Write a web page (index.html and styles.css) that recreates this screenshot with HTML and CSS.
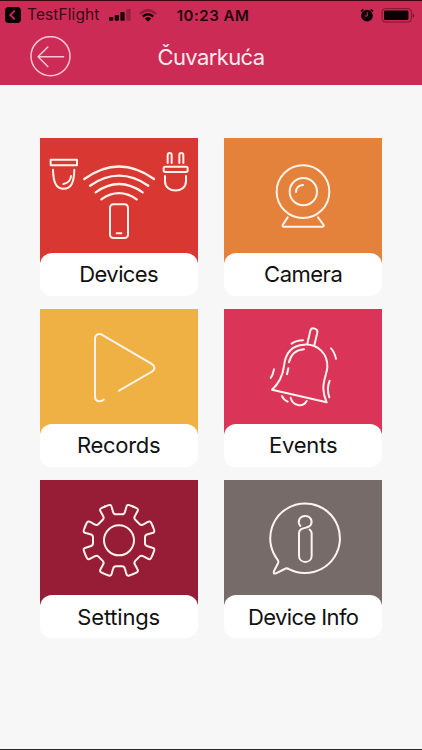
FILE: index.html
```html
<!DOCTYPE html>
<html lang="sr-Latn">
<head>
<meta charset="utf-8">
<title>Čuvarkuća</title>
<link rel="stylesheet" href="styles.css">
</head>
<body>
<div class="screen">
  <header class="header">
    <div class="status">
      <div class="status-left">
        <svg class="back-app" viewBox="0 0 48 48"><rect width="48" height="48" rx="11" fill="#0b0205"/><path d="M29 11 16 24 29 37" fill="none" stroke="#cb2b54" stroke-width="5.5"/></svg>
        <span class="app-name">TestFlight</span>
        <svg class="signal" viewBox="0 0 66 36"><g fill="#17040a"><rect y="24" width="13" height="11" rx="3"/><rect x="17" y="18" width="13" height="17" rx="3"/><rect x="34" y="9" width="13" height="26" rx="3"/></g><rect x="52" width="13" height="35" rx="3" fill="#9b1f40"/></svg>
        <svg class="wifi" viewBox="0 0 54 38"><g fill="none" stroke-width="7"><path d="M3 14Q27-8 51 14" stroke="#8e1c3b"/><path d="M11 22Q27 8 43 22" stroke="#17040a"/></g><path d="M17 28Q27 19 37 28L27 38Z" fill="#17040a"/></svg>
      </div>
      <time class="clock">10:23 AM</time>
      <div class="status-right">
        <svg class="alarm" viewBox="0 0 42 42"><circle cx="21" cy="23" r="17.5" fill="#0b0205"/><path d="M3 10 10 4M32 4 39 10" stroke="#0b0205" stroke-width="5"/><path d="M22 13V24H14" fill="none" stroke="#cb2b54" stroke-width="3"/></svg>
        <svg class="battery" viewBox="0 0 102 46"><rect x="2" y="2" width="90" height="41" rx="10" fill="none" stroke="#771831" stroke-width="3"/><rect x="8" y="8" width="75" height="29" rx="4" fill="#0b0205"/><path d="M96 16Q101 18 101 23T96 30Z" fill="#771831"/></svg>
      </div>
    </div>
    <div class="titlebar">
      <svg class="back" viewBox="0 0 122 122"><g fill="none" stroke="#ffc4d6" stroke-width="4.5" stroke-linecap="round" stroke-linejoin="round"><circle cx="61" cy="60" r="58"/><path d="M100 62H24M53 33 24 62 53 91"/></g></svg>
      <h1 class="title">Čuvarkuća</h1>
    </div>
  </header>
  <main class="grid">
    <section class="card devices">
      <svg class="art" viewBox="30 23 474 375">
        <rect x="62" y="88" width="79" height="17"/>
        <path d="M69 118C70 158 79 175 101 175S132 158 133 118M123 137Q121 157 100 161"/>
        <g stroke-width="7"><path d="M163 146Q267 71 372 146M180 166Q267 106 355 166M197 186Q267 136 338 186M214 207Q267 170 320 207"/></g>
        <rect x="240" y="222" width="54" height="101" rx="10"/><path d="M260 309H274"/>
        <rect x="401" y="109" width="72" height="16" rx="5"/>
        <path d="M413 98V75Q413 68 419 68T425 75V98M448 98V75Q448 68 454 68T460 75V98M405 137V153C405 190 468 190 468 153V137"/>
      </svg>
      <span class="label w-devices">Devices</span>
    </section>
    <section class="card camera">
      <svg class="art" viewBox="27 23 474 375"><circle cx="264" cy="184" r="79"/><circle cx="265" cy="184" r="41"/><path d="M243 185Q244 165 264 164M218 261 203 284Q201 289 208 289H321Q328 289 326 284L309 261"/></svg>
      <span class="label w-camera">Camera</span>
    </section>
    <section class="card records">
      <svg class="art" viewBox="30 27 474 375"><path d="M221 299C210 308 195 304 195 290V116C195 102 208 99 219 106L364 191Q383 204 364 216L267 272"/></svg>
      <span class="label w-records">Records</span>
    </section>
    <section class="card events">
      <svg class="art" viewBox="27 27 474 375">
        <path d="M171 269C190 252 203 229 207 198C211 160 231 136 267 134C309 131 339 162 337 202C335 224 324 241 325 267Q326 287 335 307Z"/>
        <path d="M277 131 286 92Q289 82 299 86 309 89 307 98L298 135M222 187Q230 151 267 148M220 205 216 223M230 131Q244 121 264 121M348 145Q358 155 363 176M177 208Q174 224 167 234M344 242Q334 267 343 292M201 288Q205 299 218 305M227 293C233 318 264 323 275 303"/>
      </svg>
      <span class="label w-events">Events</span>
    </section>
    <section class="card settings">
      <svg class="art" viewBox="30 24 474 375">
        <defs><path id="tooth" d="M225 103.6 236 99.5Q243 97 245 105L249 119Q251 127 258 127H276Q283 127 285 119L289 105Q291 97 298 99.5L309 103.6"/></defs>
        <circle cx="267" cy="205" r="45"/>
        <use href="#tooth"/><use href="#tooth" transform="rotate(45 267 205)"/><use href="#tooth" transform="rotate(90 267 205)"/><use href="#tooth" transform="rotate(135 267 205)"/><use href="#tooth" transform="rotate(180 267 205)"/><use href="#tooth" transform="rotate(225 267 205)"/><use href="#tooth" transform="rotate(270 267 205)"/><use href="#tooth" transform="rotate(315 267 205)"/>
      </svg>
      <span class="label w-settings">Settings</span>
    </section>
    <section class="card info">
      <svg class="art" viewBox="27 24 474 375">
        <path d="M187 262A104.500 104.500 0 1 1 222 291.500Q215 287 209 291L183 304Q174 307 177 297L189 274Q192 268 187 262Z"/>
        <path d="M256 162C246 149 253 132 271 132C287 132 294 147 287 159C279 172 252 163 252 184V251C252 276 290 276 290 251V184Q290 177 284 173"/>
      </svg>
      <span class="label w-info">Device Info</span>
    </section>
  </main>
</div>
</body>
</html>
```
FILE: styles.css
```css
* { box-sizing: border-box; }
body { margin: 0; background: #f7f7f7; font-family: Inter, "Liberation Sans", sans-serif; }
.screen { height: 750px; overflow: hidden; border-bottom: 1px solid #29292b; }
.header { height: 85px; background: #cb2b54; border-top: 1px solid #3a0712; }
.status { display: grid; grid-template-columns: 170px 1fr 170px; height: 28px; align-items: center; }
.status svg { display: block; }
.status-left { display: flex; align-items: center; padding-left: 5px; }
.back-app { width: 16px; height: 16px; margin-right: 6px; }
.app-name { width: 73px; font-size: 15.4px; line-height: 18px; letter-spacing: 0.15px; color: #380b17; white-space: nowrap; }
.signal { width: 22px; height: 12px; margin-left: 9px; }
.wifi { width: 18px; height: 13px; margin-left: 8px; }
.clock { justify-self: center; font-size: 15px; font-weight: 600; letter-spacing: 0.5px; color: #22060e; white-space: nowrap; padding-left: 4px; }
.status-right { display: flex; align-items: center; justify-content: flex-end; padding-right: 7px; }
.alarm { width: 14px; height: 14px; margin-right: 7px; }
.battery { width: 34px; height: 15px; }
.titlebar { display: grid; grid-template-columns: 70px 1fr 70px; align-items: center; height: 55px; }
.back { width: 41px; height: 41px; margin-left: 30px; }
.title { margin: 0; font-size: 22px; line-height: 28px; font-weight: 400; letter-spacing: -0.6px; text-align: center; color: #ffe9f0; }
.grid { display: grid; grid-template-columns: 158px 158px; gap: 13.4px 26.5px; padding: 52.6px 0 0 39.7px; }
.card { height: 158px; }
.devices { background: linear-gradient(#d93832 125px, transparent 125px); }
.camera { background: linear-gradient(#e4813a 125px, transparent 125px); }
.records { background: linear-gradient(#f0b144 125px, transparent 125px); }
.events { background: linear-gradient(#da3559 125px, transparent 125px); }
.settings { background: linear-gradient(#961d35 125px, transparent 125px); }
.info { background: linear-gradient(#766b69 125px, transparent 125px); }
.art { display: block; width: 158px; height: 125px; margin-bottom: -10px; fill: none; stroke: #fff3ec; stroke-width: 6; stroke-linecap: round; stroke-linejoin: round; }
.label { position: relative; display: flex; align-items: center; justify-content: center; height: 43px; border-radius: 12px; background: #fff; color: #111; font-size: 22px; white-space: nowrap; }
.w-devices, .w-info { letter-spacing: -0.6px; }
.w-camera { letter-spacing: -0.5px; }
.w-records { letter-spacing: -0.3px; }
.w-events, .w-settings { letter-spacing: -0.2px; }
```
